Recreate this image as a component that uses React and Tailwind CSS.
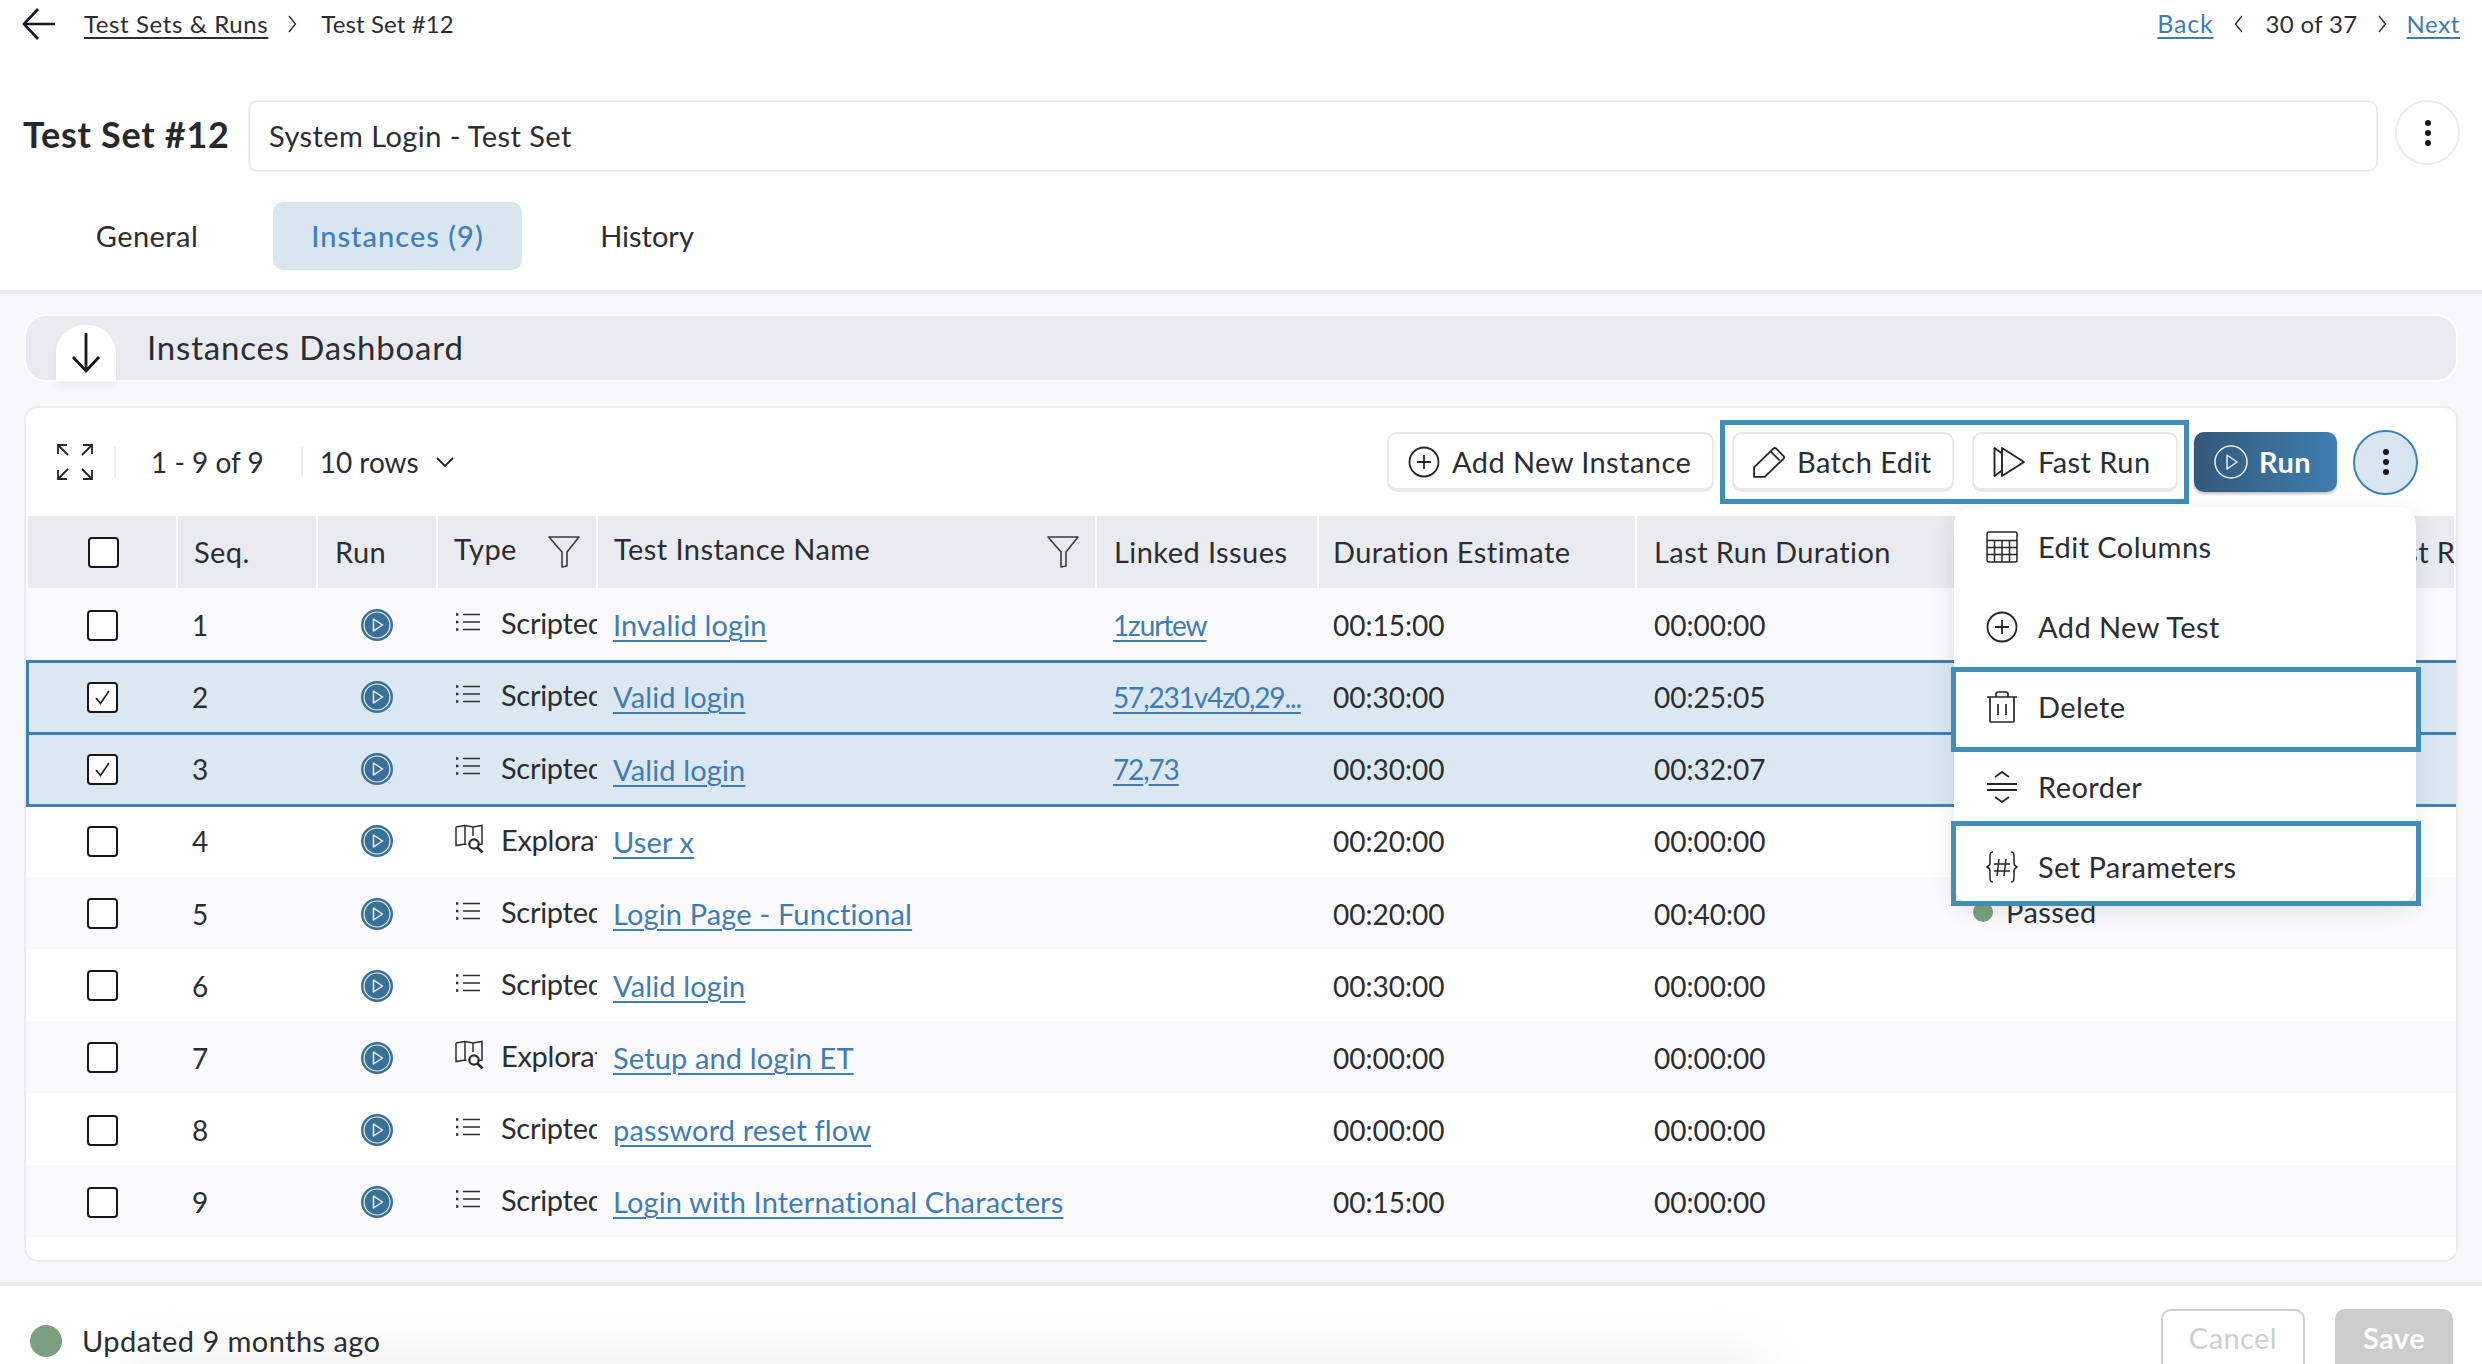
import React from 'react';

const rows = [
  { seq: 1, kind: 'Scripted', name: 'Invalid login', issues: ['1zurtew'], est: '00:15:00', last: '00:00:00' },
  { seq: 2, kind: 'Scripted', name: 'Valid login', issues: ['57,231v4z0,29...'], est: '00:30:00', last: '00:25:05', selected: 'first' },
  { seq: 3, kind: 'Scripted', name: 'Valid login', issues: ['72', '73'], est: '00:30:00', last: '00:32:07', selected: 'last' },
  { seq: 4, kind: 'Exploratory', name: 'User x', issues: [], est: '00:20:00', last: '00:00:00' },
  { seq: 5, kind: 'Scripted', name: 'Login Page - Functional', issues: [], est: '00:20:00', last: '00:40:00', status: 'Passed' },
  { seq: 6, kind: 'Scripted', name: 'Valid login', issues: [], est: '00:30:00', last: '00:00:00' },
  { seq: 7, kind: 'Exploratory', name: 'Setup and login ET', issues: [], est: '00:00:00', last: '00:00:00' },
  { seq: 8, kind: 'Scripted', name: 'password reset flow', issues: [], est: '00:00:00', last: '00:00:00' },
  { seq: 9, kind: 'Scripted', name: 'Login with International Characters', issues: [], est: '00:15:00', last: '00:00:00' },
];

const gridCols = 'grid grid-cols-[152px_140px_120px_160px_499px_222px_318px_320px_410px_89px]';

const rowStyle = (r, i) => {
  if (r.selected === 'first') return 'bg-[#dbe7f1] shadow-[inset_3px_0_0_#3f80b8,inset_0_3px_0_#3f80b8]';
  if (r.selected === 'last') return 'relative bg-[#dbe7f1] shadow-[inset_3px_0_0_#3f80b8,inset_0_3px_0_#3f80b8,0_3px_0_#3f80b8]';
  return i % 2 === 0 ? 'bg-[#fafafc]' : 'bg-white';
};

function Dots({ size = 65, className = '' }) {
  return (
    <span className={`flex shrink-0 flex-col items-center justify-center gap-[4px] rounded-full ${className}`} style={{ width: size, height: size }}>
      <span className="h-[6px] w-[6px] rounded-full bg-[#15171c]" />
      <span className="h-[6px] w-[6px] rounded-full bg-[#15171c]" />
      <span className="h-[6px] w-[6px] rounded-full bg-[#15171c]" />
    </span>
  );
}

function PlusCircle({ size = 32 }) {
  return (
    <svg width={size} height={size} viewBox="0 0 32 32" fill="none" stroke="#23252b" strokeWidth="1.8" className="shrink-0">
      <circle cx="16" cy="16" r="14.5" />
      <path d="M16 9v14M9 16h14" />
    </svg>
  );
}

function Funnel() {
  return (
    <svg width="32" height="32" viewBox="0 0 32 32" fill="none" stroke="#3a3c42" strokeWidth="1.6" className="shrink-0">
      <path d="M1 1h30L19 16v14l-5 1V16L1 1z" strokeLinejoin="round" />
    </svg>
  );
}

function PlayBadge() {
  return (
    <svg width="32" height="32" viewBox="0 0 32 32" className="shrink-0">
      <circle cx="16" cy="16" r="16" fill="#3a6f96" />
      <circle cx="16" cy="16" r="13" fill="none" stroke="#e6eff6" strokeWidth="1.2" />
      <path d="M12.5 10l9 6-9 6z" fill="none" stroke="#f2f7fb" strokeWidth="1.5" strokeLinejoin="round" />
    </svg>
  );
}

function ListIcon() {
  return (
    <svg width="26" height="20" viewBox="0 0 26 20" fill="none" stroke="#2b2d33" strokeWidth="1.7" className="shrink-0">
      <path d="M8 2.5h17M8 10h17M8 17.5h17" />
      <path d="M1 2.5h2.4M1 10h2.4M1 17.5h2.4" strokeWidth="2.6" />
    </svg>
  );
}

function MapSearchIcon() {
  return (
    <svg width="29" height="29" viewBox="0 0 29 29" fill="none" stroke="#2b2d33" strokeWidth="1.5" className="shrink-0">
      <path d="M1 3l9-1.5 8 1.5 9-1.5v18.5l-3 .5M1 3v18.5l9-1.5 1.5.3M10 1.5V20M18 3v9" />
      <circle cx="19" cy="20" r="4.7" strokeWidth="2.2" />
      <path d="M22.5 23.5l5 5" strokeWidth="2.6" />
    </svg>
  );
}

function Checkbox({ checked }) {
  return (
    <span className="flex h-[31px] w-[31px] items-center justify-center rounded-[4px] border-2 border-[#15171c] bg-white">
      {checked && (
        <svg width="17" height="17" viewBox="0 0 17 17" fill="none" stroke="#15171c" strokeWidth="1.6">
          <path d="M2 9l4.5 5.5L15 2" />
        </svg>
      )}
    </span>
  );
}

function ToolButton({ icon, label, className = '' }) {
  return (
    <button className={`flex h-[60px] items-center gap-[12px] rounded-[10px] border-2 border-b-[4px] border-[#e8e8ed] bg-white pl-[19px] pt-[2px] text-[#2b2d33] ${className}`}>
      {icon}
      <span className="whitespace-nowrap">{label}</span>
    </button>
  );
}

function MenuItem({ icon, label }) {
  return (
    <div className="flex h-[80px] items-center gap-[20px] pl-[32px] text-[#2b2d33]">
      <span className="flex w-[32px] justify-center">{icon}</span>
      {label}
    </div>
  );
}

function HeadCell({ children, first, className = '' }) {
  return (
    <div className={`flex items-center overflow-hidden whitespace-nowrap border-r-2 border-white ${first ? 'border-l-2' : ''} ${className}`}>
      {children}
    </div>
  );
}

export default function App() {
  return (
    <div className="relative flex h-[1364px] w-[2482px] flex-col overflow-hidden bg-white text-[29px] tracking-[0.015em] text-[#2b2d33] [font-family:Lato,sans-serif]">
      {/* top */}
      <div className="flex h-[48px] items-center justify-between pl-[22px] pr-[22px] text-[24px] tracking-[0.025em]">
        <div className="flex items-center">
          <svg width="34" height="34" viewBox="0 0 34 34" fill="none" stroke="#15171c" strokeWidth="2.6">
            <path d="M33 17H3M16 2L2 17l14 15" />
          </svg>
          <a className="ml-[28px] underline decoration-2 underline-offset-4">Test Sets &amp; Runs</a>
          <svg width="9" height="18" viewBox="0 0 9 18" fill="none" stroke="#2b2d33" strokeWidth="1.4" className="ml-[20px]">
            <path d="M1 1l6.5 8L1 17" />
          </svg>
          <span className="ml-[24px] tracking-[0.005em]">Test Set #12</span>
        </div>
        <div className="flex items-center">
          <a className="text-[25px] tracking-[0.03em] text-[#3f7cb5] underline decoration-2 underline-offset-4">Back</a>
          <svg width="9" height="18" viewBox="0 0 9 18" fill="none" stroke="#2b2d33" strokeWidth="1.4" className="ml-[21px]">
            <path d="M8 1L1.5 9 8 17" />
          </svg>
          <span className="ml-[22px] tracking-[0.015em]">30 of 37</span>
          <svg width="9" height="18" viewBox="0 0 9 18" fill="none" stroke="#2b2d33" strokeWidth="1.4" className="ml-[20px]">
            <path d="M1 1l6.5 8L1 17" />
          </svg>
          <a className="ml-[20px] text-[#3f7cb5] underline decoration-2 underline-offset-4">Next</a>
        </div>
      </div>

      <div className="mt-[52px] flex h-[72px] items-start pl-[23px] pr-[22px]">
        <h1 className="w-[225px] shrink-0 self-center whitespace-nowrap pb-[4px] text-[36px] font-bold tracking-[0.02em] text-[#26282d]">Test Set #12</h1>
        <div className="flex h-[72px] flex-1 items-center rounded-[10px] border-2 border-[#ebebf0] pl-[19px]">System Login - Test Set</div>
        <Dots className="ml-[17px] border-2 border-[#ebebf0]" />
      </div>

      <div className="mt-[30px] flex h-[68px] pl-[57px]">
        <button className="w-[180px] rounded-[10px]">General</button>
        <button className="ml-[36px] w-[249px] rounded-[10px] bg-[#d9e6f1] font-medium tracking-[0.035em] text-[#3f80b8]">Instances (9)</button>
        <button className="ml-[39px] w-[172px] rounded-[10px] tracking-normal">History</button>
      </div>

      {/* main area */}
      <div className="mt-[20px] flex flex-1 flex-col border-t-4 border-[#e9ebf0] bg-[#f8f8fb] pl-[24px] pr-[24px]">
        <div className="mt-[20px] flex h-[68px] items-center rounded-[22px] border-2 border-white bg-[#e9ebf0] pl-[30px]">
          <div className="flex h-[56px] w-[60px] translate-y-[5px] items-center justify-center rounded-t-[28px] bg-white shadow-[0_6px_8px_rgba(0,0,0,0.05)]">
            <svg width="30" height="42" viewBox="0 0 30 42" fill="none" stroke="#15171c" strokeWidth="2.8">
              <path d="M15 1v38M2 25l13 14 13-14" />
            </svg>
          </div>
          <span className="ml-[31px] text-[33px] tracking-[0.025em]">Instances Dashboard</span>
        </div>

        <div className="mt-[24px] flex h-[856px] flex-col rounded-[14px] border-2 border-[#ebebf0] bg-white">
          <div className="flex h-[108px] items-center pl-[31px]">
            <svg width="36" height="36" viewBox="0 0 36 36" fill="none" stroke="#23252b" strokeWidth="1.8">
              <path d="M1 10V1h9M1 1l10 10M26 1h9v9M35 1L25 11M1 26v9h9M1 35l10-10M35 26v9h-9M35 35L25 25" />
            </svg>
            <span className="ml-[21px] h-[30px] w-[2px] bg-[#eeeef2]" />
            <span className="ml-[35px] text-[28px] tracking-normal">1 - 9 of 9</span>
            <span className="ml-[37px] h-[30px] w-[2px] bg-[#eeeef2]" />
            <span className="ml-[17px] text-[28px] tracking-normal">10 rows</span>
            <svg width="18" height="10" viewBox="0 0 18 10" fill="none" stroke="#23252b" strokeWidth="1.8" className="ml-[17px]">
              <path d="M1 1l8 8 8-8" />
            </svg>

            <div className="ml-auto flex items-center pr-[38px]">
              <ToolButton icon={<PlusCircle />} label="Add New Instance" className="w-[327px]" />
              <div className="ml-[6px] flex h-[84px] items-center gap-[18px] border-[5px] border-[#418db5] pl-[7px] pr-[6px]">
                <ToolButton
                  label="Batch Edit"
                  className="w-[222px]"
                  icon={
                    <svg width="32" height="32" viewBox="0 0 30 30" fill="none" stroke="#23252b" strokeWidth="1.7" strokeLinejoin="round">
                      <path d="M1 29v-9L19 2.5a2 2 0 0 1 2.8 0l6.7 6.7a2 2 0 0 1 0 2.8L11 29H1zM16.5 5l8.5 8.5" />
                    </svg>
                  }
                />
                <ToolButton
                  label="Fast Run"
                  className="w-[206px]"
                  icon={
                    <svg width="33" height="32" viewBox="0 0 33 32" fill="none" stroke="#23252b" strokeWidth="1.9" strokeLinejoin="round">
                      <path d="M9 2l22 14L9 30V2zM9 7.5L1.5 2v28L9 24.5" />
                    </svg>
                  }
                />
              </div>
              <button className="ml-[5px] flex h-[60px] w-[143px] items-center gap-[11px] rounded-[10px] bg-gradient-to-r from-[#33597a] to-[#3f7eb0] pl-[20px] font-bold text-white shadow-[0_2px_3px_rgba(0,0,0,0.25)]">
                <svg width="34" height="34" viewBox="0 0 34 34" fill="none" stroke="#e6f0f7" strokeWidth="1.5">
                  <circle cx="17" cy="17" r="16" />
                  <path d="M13 10l10 7-10 7z" strokeLinejoin="round" />
                </svg>
                Run
              </button>
              <Dots className="ml-[16px] border-2 border-[#3f80b8] bg-[#d9e6f1]" />
            </div>
          </div>

          {/* table */}
          <div className={gridCols + ' h-[72px] overflow-hidden bg-[#e9ebf0]'}>
            <HeadCell first className="pl-[60px]"><Checkbox /></HeadCell>
            <HeadCell className="pl-[16px]">Seq.</HeadCell>
            <HeadCell className="pl-[17px]">Run</HeadCell>
            <HeadCell className="justify-between pl-[16px] pr-[16px]"><span className="mb-[6px]">Type</span><Funnel /></HeadCell>
            <HeadCell className="justify-between pl-[16px] pr-[16px]"><span className="mb-[6px]">Test Instance Name</span><Funnel /></HeadCell>
            <HeadCell className="pl-[17px]">Linked Issues</HeadCell>
            <HeadCell className="pl-[14px]">Duration Estimate</HeadCell>
            <HeadCell className="pl-[17px]">Last Run Duration</HeadCell>
            <HeadCell className="pl-[16px]">Last Run Status</HeadCell>
            <HeadCell className="pl-[8px]">Last Run</HeadCell>
          </div>
          {rows.map((r, i) => (
            <div key={r.seq} className={`${gridCols} h-[72.15px] items-center pt-[2px] ${rowStyle(r, i)}`}>
              <div className="pl-[61px]"><Checkbox checked={!!r.selected} /></div>
              <div className="pl-[14px] text-[28px] tracking-normal">{r.seq}</div>
              <div className="pl-[43px]"><PlayBadge /></div>
              <div className="flex items-center pl-[17px]">
                <span className="mb-[6px] flex w-[46px] shrink-0">{r.kind === 'Scripted' ? <ListIcon /> : <MapSearchIcon />}</span>
                <span className="w-[96px] overflow-hidden whitespace-nowrap pb-[4px] tracking-[-0.01em]">{r.kind}</span>
              </div>
              <div className="pl-[15px] tracking-[0.005em]"><a className="text-[#3f7cb5] underline decoration-2 underline-offset-4">{r.name}</a></div>
              <div className="whitespace-nowrap pl-[16px] text-[28px] tracking-[-0.04em]">
                {r.issues.map((iss, j) => (
                  <React.Fragment key={iss}>
                    {j > 0 && <span className="text-[#3f7cb5]">,</span>}
                    <a className="text-[#3f7cb5] underline decoration-2 underline-offset-4">{iss}</a>
                  </React.Fragment>
                ))}
              </div>
              <div className="pl-[14px] text-[28px] tracking-normal">{r.est}</div>
              <div className="pl-[17px] text-[28px] tracking-normal">{r.last}</div>
              <div className="mb-[3px] flex items-center pl-[16px]">
                {r.status && (
                  <>
                    <span className="h-[20px] w-[20px] rounded-full bg-[#7b9f7f]" />
                    <span className="ml-[13px]">{r.status}</span>
                  </>
                )}
              </div>
              <div />
            </div>
          ))}
        </div>
      </div>

      {/* footer */}
      <div className="relative flex h-[82px] shrink-0 items-start justify-between overflow-hidden border-t-4 border-[#e9ebf0] bg-white pl-[30px] pr-[29px]">
        <div className="absolute bottom-[-36px] left-[120px] h-[50px] w-[1650px] rounded-full bg-[#eef0ef] blur-[24px]" />
        <div className="relative mt-[33px] flex items-center">
          <span className="h-[32px] w-[32px] rounded-full bg-[#7b9f7f]" />
          <span className="ml-[20px]">Updated 9 months ago</span>
        </div>
        <div className="relative mt-[23px] flex gap-[30px]">
          <button className="h-[70px] w-[144px] rounded-[10px] border-2 border-[#cfcfcf] pb-[12px] text-[#cfcfcf]">Cancel</button>
          <button className="h-[70px] w-[118px] rounded-[10px] bg-[#cccccc] pb-[12px] font-bold text-white">Save</button>
        </div>
      </div>

      {/* kebab menu */}
      <div className="absolute left-[1954px] top-[507px] h-[396px] w-[462px] rounded-[18px] bg-white shadow-[0_6px_24px_rgba(30,40,60,0.12)]">
        <MenuItem
          label="Edit Columns"
          icon={
            <svg width="32" height="32" viewBox="0 0 32 32" fill="none" stroke="#23252b" strokeWidth="1.5">
              <rect x="1" y="1" width="30" height="30" rx="2" />
              <path d="M1 9.5h30M1 16.5h30M1 23.5h30M8.5 9.5V31M16 9.5V31M23.5 9.5V31" />
            </svg>
          }
        />
        <MenuItem label="Add New Test" icon={<PlusCircle />} />
        <MenuItem
          label="Delete"
          icon={
            <svg width="32" height="32" viewBox="0 0 32 32" fill="none" stroke="#23252b" strokeWidth="1.7">
              <path d="M1 6h30M4 6v24a1 1 0 0 0 1 1h22a1 1 0 0 0 1-1V6M10 6V3a2 2 0 0 1 2-2h8a2 2 0 0 1 2 2v3M12 13v11M20 13v11" />
            </svg>
          }
        />
        <MenuItem
          label="Reorder"
          icon={
            <svg width="32" height="32" viewBox="0 0 32 32" fill="none" stroke="#23252b" strokeWidth="1.8">
              <path d="M1 13h30M1 19h30M9 6l7-5 7 5M9 26l7 5 7-5" />
            </svg>
          }
        />
        <MenuItem
          label="Set Parameters"
          icon={
            <svg width="32" height="32" viewBox="0 0 32 32" fill="none" stroke="#23252b" strokeWidth="1.5">
              <path d="M7 1C4 1 4 3 4 6v6c0 2-1 3-3 4 2 1 3 2 3 4v6c0 3 0 5 3 5M25 1c3 0 3 2 3 5v6c0 2 1 3 3 4-2 1-3 2-3 4v6c0 3 0 5-3 5M13 8l-2 17M20 8l-2 17M8 13h16M8 20h16" />
            </svg>
          }
        />
        <div className="absolute -left-[3px] top-[160px] h-[85px] w-[470px] border-[5px] border-[#418db5]" />
        <div className="absolute -left-[3px] top-[314px] h-[85px] w-[470px] border-[5px] border-[#418db5]" />
      </div>
    </div>
  );
}
